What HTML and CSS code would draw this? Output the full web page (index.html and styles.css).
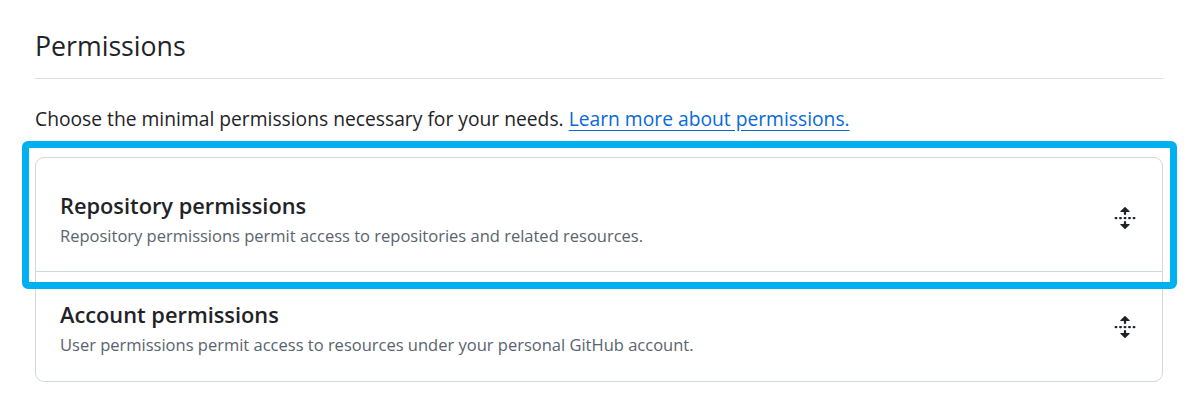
FILE: index.html
```html
<!DOCTYPE html>
<html lang="en">
<head>
<meta charset="utf-8">
<title>Permissions</title>
<link rel="stylesheet" href="styles.css">
</head>
<body>
<main class="page">
  <h2 class="subhead">Permissions</h2>
  <p class="lead">Choose the minimal permissions necessary for your needs. <a href="#" class="link">Learn more about permissions.</a></p>
  <div class="box">
    <div class="row row-first">
      <div class="row-text">
        <div class="row-title">Repository permissions</div>
        <div class="row-desc">Repository permissions permit access to repositories and related resources.</div>
      </div>
      <svg class="unfold" viewBox="0 0 16 16" aria-hidden="true"><path d="m8.177.677 2.896 2.896a.25.25 0 0 1-.177.427H8.75v1.25a.75.75 0 0 1-1.5 0V4H5.104a.25.25 0 0 1-.177-.427L7.823.677a.25.25 0 0 1 .354 0ZM7.25 10.75a.75.75 0 0 1 1.5 0V12h2.146a.25.25 0 0 1 .177.427l-2.896 2.896a.25.25 0 0 1-.354 0l-2.896-2.896A.25.25 0 0 1 5.104 12H7.250v-1.25Zm-5-2a.75.75 0 0 0 0-1.5h-.5a.75.75 0 0 0 0 1.5h.5ZM6 8a.75.75 0 0 1-.75.75h-.5a.75.75 0 0 1 0-1.5h.5A.75.75 0 0 1 6 8Zm2.25.75a.75.75 0 0 0 0-1.5h-.5a.75.75 0 0 0 0 1.5h.5ZM12 8a.75.75 0 0 1-.75.75h-.5a.75.75 0 0 1 0-1.5h.5A.75.75 0 0 1 12 8Zm2.25.75a.75.75 0 0 0 0-1.5h-.5a.75.75 0 0 0 0 1.5h.5Z"/></svg>
      <div class="highlight"></div>
    </div>
    <div class="row">
      <div class="row-text">
        <div class="row-title">Account permissions</div>
        <div class="row-desc">User permissions permit access to resources under your personal GitHub account.</div>
      </div>
      <svg class="unfold" viewBox="0 0 16 16" aria-hidden="true"><path d="m8.177.677 2.896 2.896a.25.25 0 0 1-.177.427H8.75v1.25a.75.75 0 0 1-1.5 0V4H5.104a.25.25 0 0 1-.177-.427L7.823.677a.25.25 0 0 1 .354 0ZM7.25 10.75a.75.75 0 0 1 1.5 0V12h2.146a.25.25 0 0 1 .177.427l-2.896 2.896a.25.25 0 0 1-.354 0l-2.896-2.896A.25.25 0 0 1 5.104 12H7.25v-1.25Zm-5-2a.75.75 0 0 0 0-1.5h-.5a.75.75 0 0 0 0 1.5h.5ZM6 8a.75.75 0 0 1-.75.75h-.5a.75.75 0 0 1 0-1.5h.5A.75.75 0 0 1 6 8Zm2.25.75a.75.75 0 0 0 0-1.5h-.5a.75.75 0 0 0 0 1.5h.5ZM12 8a.75.75 0 0 1-.75.75h-.5a.75.75 0 0 1 0-1.5h.5A.75.75 0 0 1 12 8Zm2.25.75a.75.75 0 0 0 0-1.5h-.5a.75.75 0 0 0 0 1.5h.5Z"/></svg>
    </div>
  </div>
</main>
</body>
</html>
```

FILE: styles.css
```css
* { box-sizing: border-box; }
html, body { margin: 0; padding: 0; background: #ffffff; }
body {
  font-family: "Open Sans", "Noto Sans", "Liberation Sans", sans-serif;
  color: #1f2328;
}
.page {
  width: 1128px;
  margin-left: 35px;
  padding-top: 28px;
}
.subhead {
  margin: 0;
  font-size: 26.7px;
  font-weight: 400;
  line-height: 36px;
  padding-bottom: 14px;
  border-bottom: 1px solid #d8dee4;
}
.lead {
  margin: 0;
  padding-top: 26px;
  font-size: 19.25px;
  line-height: 28px;
  color: #1f2328;
}
.link {
  color: #0969da;
  text-decoration: underline;
  text-underline-offset: 4px;
}
.box {
  margin-top: 24px;
  border: 1px solid #d1d9e0;
  border-radius: 9px;
}
.row {
  position: relative;
  display: flex;
  align-items: center;
  padding: 28px 25px 21px 24px;
}
.row-first {
  padding-top: 33px;
  padding-bottom: 20px;
  border-bottom: 1px solid #d1d9e0;
}
.row-text { flex: 1; }
.row-title {
  font-size: 21.8px;
  font-weight: 600;
  line-height: 30px;
  color: #1f2328;
}
.row-desc {
  font-size: 16.5px;
  line-height: 30px;
  color: #59636e;
}
.unfold {
  width: 24px;
  height: 24px;
  fill: #1f2328;
  margin-top: -7px;
}
.highlight {
  position: absolute;
  left: -14px;
  top: -17px;
  right: -15px;
  bottom: -18px;
  border: 7px solid #00b0f0;
  border-radius: 6px;
  pointer-events: none;
}
```
